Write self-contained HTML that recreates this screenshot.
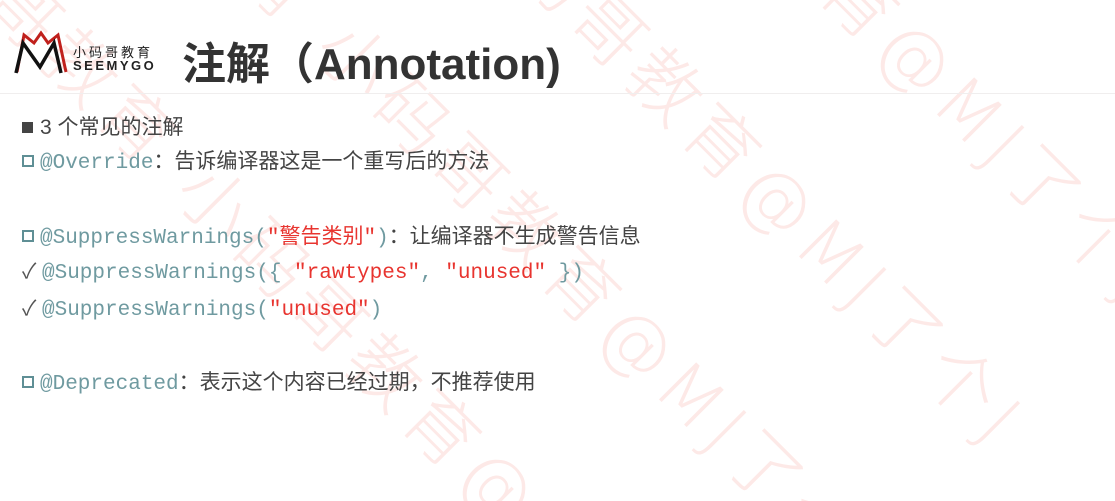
<!DOCTYPE html>
<html><head><meta charset="utf-8"><style>
html,body{margin:0;padding:0;background:#fff;width:1115px;height:501px;overflow:hidden;}
body{position:relative;font-family:"Liberation Sans","Noto Sans CJK SC",sans-serif;}
#wmc{position:absolute;left:0;top:0;width:1115px;height:501px;overflow:hidden;}
.wm{position:absolute;color:#fde9e7;font-size:72px;font-family:"DejaVu Sans","Noto Sans CJK SC",sans-serif;font-weight:200;white-space:nowrap;line-height:1;letter-spacing:8px;}
.r{transform-origin:0 50%;transform:rotate(45deg);}
.l{transform-origin:100% 50%;transform:rotate(45deg);text-align:right;width:1400px;}
.t{position:absolute;color:#444;z-index:2;}
.mono{font-family:"Liberation Mono",monospace;color:#6f9aa0;font-size:21px;}
.red{color:#e8342f;}
.sq{display:inline-block;width:8px;height:8px;border:2.5px solid #5f8f95;margin-right:6px;vertical-align:1px;}
.ck{display:inline-block;width:15px;color:#555;margin-right:5px;}
.line{position:absolute;left:22px;font-size:21px;white-space:nowrap;z-index:2;color:#444;}
</style></head><body>
<div id="wmc">
<div class="wm r" style="left:890px;top:-4px">@MJ了个J</div>
<div class="wm l" style="left:-510px;top:-4px">小码哥教育 小码哥教育 </div>
<div class="wm r" style="left:752px;top:138px">@MJ了个J</div>
<div class="wm l" style="left:-648px;top:138px">小码哥教育 小码哥教育 </div>
<div class="wm r" style="left:612px;top:281px">@MJ了个J</div>
<div class="wm l" style="left:-788px;top:281px">小码哥教育 小码哥教育 </div>
<div class="wm r" style="left:472px;top:424px">@MJ了个J</div>
<div class="wm l" style="left:-928px;top:424px">小码哥教育 小码哥教育 </div>
</div>

<svg style="position:absolute;left:14px;top:29px;z-index:2" width="56" height="46" viewBox="0 0 56 46">
<polyline points="3,43 10,6 20,14 27,4 34,14 44,6 52,43" fill="none" stroke="#c0201c" stroke-width="3"/>
<polyline points="2,44 9,14 26,38 40,14 47,44" fill="none" stroke="#111" stroke-width="3.5"/>
</svg>
<div class="t" style="left:73px;top:42px;font-size:13px;color:#222;letter-spacing:3px">小码哥教育</div>
<div class="t" style="left:73px;top:58px;font-size:13px;font-weight:bold;color:#222;letter-spacing:2.5px">SEEMYGO</div>
<div class="t" style="left:182px;top:28px;font-size:44px;font-weight:bold;color:#333;white-space:nowrap">注解（Annotation)</div>
<div style="position:absolute;left:0;top:93px;width:1115px;height:1px;background:#f0eeee;z-index:2"></div>

<div class="line" style="top:111px"><span style="display:inline-block;width:11px;height:11px;background:#444;margin-right:7px;vertical-align:1px"></span>3 个常见的注解</div>
<div class="line" style="top:145px"><span class="sq"></span><span class="mono">@Override</span>：告诉编译器这是一个重写后的方法</div>
<div class="line" style="top:220px"><span class="sq"></span><span class="mono">@SuppressWarnings(<span class="red">"警告类别"</span>)</span>：让编译器不生成警告信息</div>
<div class="line" style="top:255px"><span class="ck">✓</span><span class="mono">@SuppressWarnings({ <span class="red">"rawtypes"</span>, <span class="red">"unused"</span> })</span></div>
<div class="line" style="top:292px"><span class="ck">✓</span><span class="mono">@SuppressWarnings(<span class="red">"unused"</span>)</span></div>
<div class="line" style="top:366px"><span class="sq"></span><span class="mono">@Deprecated</span>：表示这个内容已经过期，不推荐使用</div>
</body></html>
